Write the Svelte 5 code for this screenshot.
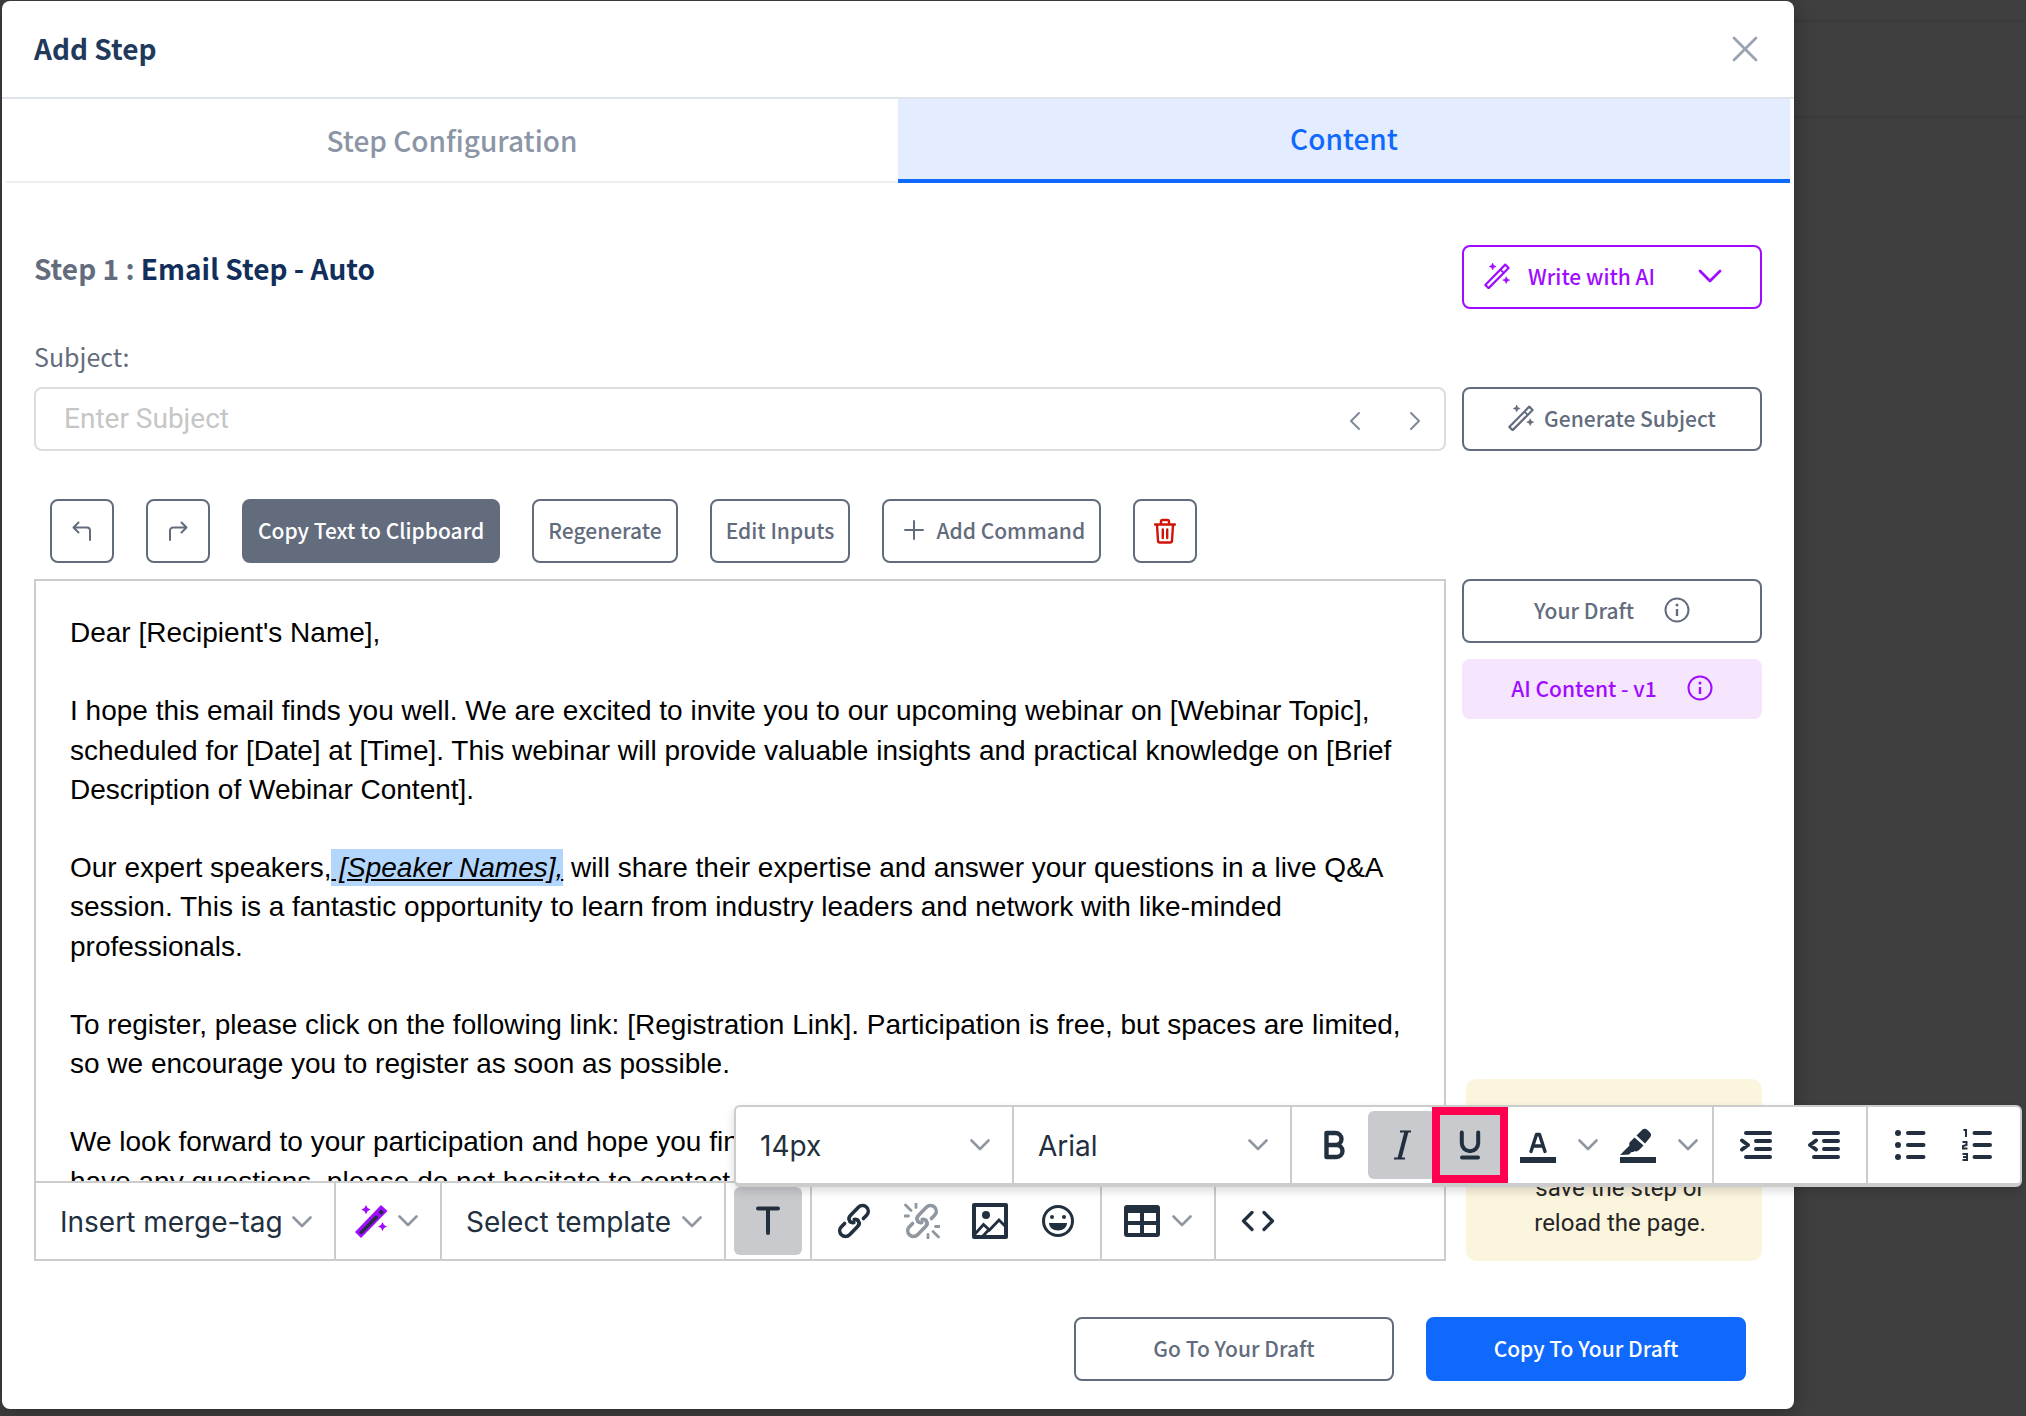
<script>
  let subject = $state('');
  let fontSize = $state('14px');
  let fontFamily = $state('Arial');
</script>

{#snippet wand()}
  <svg class="icon-wand" viewBox="0 0 24 24" aria-hidden="true">
    <path d="M1.200 20.300 19.600 1.500l3.100 3.100L4.300 23.200z" fill="none" stroke="currentColor" stroke-width="2" stroke-linejoin="round" />
    <path d="M15.200 6.200l3 3" fill="none" stroke="currentColor" stroke-width="1.600" />
    <path d="M8 0l1 2.200 2.200 1L9 4.200 8 6.400 7 4.200 4.800 3.200 7 2.200zM20.500 12.600l1 2.200 2.200 1-2.200 1-1 2.200-1-2.200-2.200-1 2.200-1z" fill="currentColor" stroke="currentColor" stroke-width=".5" />
  </svg>
{/snippet}

{#snippet chevron()}
  <svg class="icon-chevron" viewBox="0 0 20 12" aria-hidden="true">
    <path d="M1.500 1.500 10 10l8.500-8.500" fill="none" stroke="currentColor" stroke-width="2.600" stroke-linecap="round" stroke-linejoin="round" />
  </svg>
{/snippet}

{#snippet info()}
  <svg class="icon-info" viewBox="0 0 26 26" aria-hidden="true">
    <circle cx="13" cy="13" r="11.500" fill="none" stroke="currentColor" stroke-width="2" />
    <circle cx="13" cy="8" r="1.500" fill="currentColor" />
    <path d="M13 12v7" fill="none" stroke="currentColor" stroke-width="2.400" />
  </svg>
{/snippet}

<div class="backdrop">
  <div class="modal" role="dialog" aria-labelledby="dialog-title">
    <header class="head">
      <h1 id="dialog-title">Add Step</h1>
      <button class="close" aria-label="Close">
        <svg viewBox="0 0 26 26"><path d="M2 2l22 22M24 2 2 24" fill="none" stroke="currentColor" stroke-width="2.800" stroke-linecap="round" /></svg>
      </button>
    </header>

    <div class="tabs" role="tablist">
      <button class="tab" role="tab" aria-selected="false">Step Configuration</button>
      <button class="tab active" role="tab" aria-selected="true">Content</button>
    </div>

    <main class="body">
      <div class="split">
        <h2><span class="muted">Step 1 :</span> Email Step - Auto</h2>
        <button class="btn purple">
          {@render wand()}
          <span>Write with AI</span>
          <svg class="ai-chevron" viewBox="0 0 24 14" aria-hidden="true"><path d="M2 2l10 10L22 2" fill="none" stroke="currentColor" stroke-width="2.800" stroke-linecap="round" stroke-linejoin="round" /></svg>
        </button>
      </div>

      <label class="subject-label" for="subject">Subject:</label>
      <div class="split">
        <div class="subject">
          <input id="subject" type="text" placeholder="Enter Subject" bind:value={subject} />
          <button class="step" aria-label="Previous subject">
            <svg viewBox="0 0 12 20"><path d="M10 2 2 10l8 8" fill="none" stroke="currentColor" stroke-width="2" stroke-linecap="round" stroke-linejoin="round" /></svg>
          </button>
          <button class="step" aria-label="Next subject">
            <svg viewBox="0 0 12 20"><path d="M2 2l8 8-8 8" fill="none" stroke="currentColor" stroke-width="2" stroke-linecap="round" stroke-linejoin="round" /></svg>
          </button>
        </div>
        <button class="btn">{@render wand()}<span>Generate Subject</span></button>
      </div>

      <div class="actions">
        <button class="btn square" aria-label="Undo">
          <svg class="icon-turn" viewBox="0 0 20 20"><path d="M6.500 1.500 1.500 6.500l5 5M1.500 6.500H15a3 3 0 0 1 3 3V19" fill="none" stroke="currentColor" stroke-width="2" stroke-linecap="round" stroke-linejoin="round" /></svg>
        </button>
        <button class="btn square" aria-label="Redo">
          <svg class="icon-turn" viewBox="0 0 20 20"><path d="M13.500 1.500l5 5-5 5M18.500 6.500H5a3 3 0 0 0-3 3V19" fill="none" stroke="currentColor" stroke-width="2" stroke-linecap="round" stroke-linejoin="round" /></svg>
        </button>
        <button class="btn filled">Copy Text to Clipboard</button>
        <button class="btn">Regenerate</button>
        <button class="btn">Edit Inputs</button>
        <button class="btn add">
          <svg class="icon-turn" viewBox="0 0 20 20" aria-hidden="true"><path d="M10 1v18M1 10h18" fill="none" stroke="currentColor" stroke-width="2" stroke-linecap="round" /></svg>
          <span>Add Command</span>
        </button>
        <button class="btn square danger" aria-label="Delete">
          <svg class="icon-trash" viewBox="0 0 22 26"><path d="M1 6.500h20M7 6V3.500A1.500 1.500 0 0 1 8.500 2h5A1.500 1.500 0 0 1 15 3.500V6M3 7l1 15.500A2 2 0 0 0 6 24.500h10a2 2 0 0 0 2-2L19 7M8.800 11.500v8.500M13.200 11.500v8.500" fill="none" stroke="currentColor" stroke-width="2.400" stroke-linecap="round" stroke-linejoin="round" /></svg>
        </button>
      </div>

      <div class="split">
        <div class="editor">
          <div class="message" contenteditable="true" role="textbox" aria-multiline="true" aria-label="Email body" tabindex="0">
            <p>Dear [Recipient's Name],</p>
            <p>I hope this email finds you well. We are excited to invite you to our upcoming webinar on [Webinar Topic], scheduled for [Date] at [Time]. This webinar will provide valuable insights and practical knowledge on [Brief Description of Webinar Content].</p>
            <p>Our expert speakers,<span class="selected">&nbsp;[Speaker Names],</span> will share their expertise and answer your questions in a live Q&amp;A session. This is a fantastic opportunity to learn from industry leaders and network with like-minded professionals.</p>
            <p>To register, please click on the following link: [Registration Link]. Participation is free, but spaces are limited, so we encourage you to register as soon as possible.</p>
            <p>We look forward to your participation and hope you find the session both informative and valuable. If you have any questions, please do not hesitate to contact us.</p>
          </div>

          <div class="tools" role="toolbar" aria-label="Editor tools">
            <div class="group"><button class="menu merge">Insert merge-tag {@render chevron()}</button></div>
            <div class="group">
              <button class="menu wand-menu" aria-label="AI tools">
                <svg class="icon-magic" viewBox="0 0 34 34" aria-hidden="true">
                  <path d="M1 28 27 1l6.500 6L7 34z" fill="#a00cff" />
                  <path d="M5 28.500 22 11l2.500 2.500L7.500 30.500z" fill="#222f3e" />
                  <path d="M27 5.500 30 8.200 27.200 11 24.500 8z" fill="#222f3e" />
                  <path d="M12 1l1.600 3 3 1.600-3 1.600L12 10.200l-1.600-3-3-1.600 3-1.600zM28.500 18l1.500 3 3 1.500-3 1.500-1.500 3-1.500-3-3-1.500 3-1.500z" fill="#a00cff" />
                </svg>
                {@render chevron()}
              </button>
            </div>
            <div class="group"><button class="menu template">Select template {@render chevron()}</button></div>

            <div class="group pad">
              <div class="anchor">
                <button class="tool on" aria-label="Text formatting" aria-expanded="true">
                  <svg viewBox="0 0 36 36"><path d="M8 5.500h20M18 5.500V30" fill="none" stroke="currentColor" stroke-width="4" stroke-linecap="round" /></svg>
                </button>

                <div class="popup" role="toolbar" aria-label="Text formatting">
                  <div class="group picker">
                    <select aria-label="Font size" bind:value={fontSize}>
                      <option>12px</option><option>14px</option><option>16px</option>
                    </select>
                    {@render chevron()}
                  </div>
                  <div class="group picker">
                    <select aria-label="Font family" bind:value={fontFamily}>
                      <option>Arial</option><option>Georgia</option><option>Verdana</option>
                    </select>
                    {@render chevron()}
                  </div>
                  <div class="group pad">
                    <button class="tool" aria-label="Bold">
                      <svg viewBox="0 0 36 36"><path d="M10.500 6h9a6 6 0 0 1 0 12h-9zM10.500 18h10a6 6 0 0 1 0 12h-10z" fill="none" stroke="currentColor" stroke-width="4.400" stroke-linejoin="round" /></svg>
                    </button>
                    <button class="tool on" aria-label="Italic">
                      <svg viewBox="0 0 36 36"><path d="M16 4.500h11M10 31.500h11" fill="none" stroke="currentColor" stroke-width="1.800" /><path d="M22.500 4.500 15.500 31.500" fill="none" stroke="currentColor" stroke-width="4" /></svg>
                    </button>
                    <button class="tool on marked" aria-label="Underline">
                      <svg viewBox="0 0 36 36"><path d="M9.800 5.500v10.500a8.200 8.200 0 0 0 16.400 0V5.500" fill="none" stroke="currentColor" stroke-width="4" stroke-linecap="round" /><path d="M10 30.500h16" fill="none" stroke="currentColor" stroke-width="4" stroke-linecap="round" /></svg>
                    </button>
                    <button class="tool" aria-label="Text color">
                      <svg viewBox="0 0 36 36"><path d="M11 24.500 16.500 7.500h3L25 24.500M13.200 19h9.600" fill="none" stroke="currentColor" stroke-width="3.400" stroke-linecap="round" stroke-linejoin="round" /><path d="M0 30h36v6H0z" fill="currentColor" /></svg>
                    </button>
                    <button class="caret" aria-label="Choose text color">{@render chevron()}</button>
                    <button class="tool" aria-label="Highlight color">
                      <svg viewBox="0 0 36 36"><path d="M0 28 9.500 18.500c-1-2.500 1-4 3-6l2-2 9 8-3 3c-2 2.200-3.800 3.600-6 2.500l-1 1h-2L9 27.500z" fill="currentColor" /><path d="M16.500 8.500 22 3c1.800-1.700 3.600-1.700 5.200-.2l2.600 2.400c1.600 1.600 1.700 3.400.2 5.200l-5 6z" fill="currentColor" /><path d="M0 30h36v6H0z" fill="currentColor" /></svg>
                    </button>
                    <button class="caret" aria-label="Choose highlight color">{@render chevron()}</button>
                  </div>
                  <div class="group pad">
                    <button class="tool" aria-label="Increase indent">
                      <svg viewBox="0 0 36 36"><path d="M8 6h24M18 14h14M18 22h14M8 30h24M4 13.500l6 4.500-6 4.500" fill="none" stroke="currentColor" stroke-width="4" stroke-linecap="round" stroke-linejoin="round" /></svg>
                    </button>
                    <button class="tool" aria-label="Decrease indent">
                      <svg viewBox="0 0 36 36"><path d="M8 6h24M18 14h14M18 22h14M8 30h24M10 13.500 4 18l6 4.500" fill="none" stroke="currentColor" stroke-width="4" stroke-linecap="round" stroke-linejoin="round" /></svg>
                    </button>
                  </div>
                  <div class="group pad">
                    <button class="tool" aria-label="Bulleted list">
                      <svg viewBox="0 0 36 36"><path d="M16 6h15.500M16 18h15.500M16 30h15.500" fill="none" stroke="currentColor" stroke-width="4" stroke-linecap="round" /><circle cx="6" cy="6" r="3" fill="currentColor" /><circle cx="6" cy="18" r="3" fill="currentColor" /><circle cx="6" cy="30" r="3" fill="currentColor" /></svg>
                    </button>
                    <button class="tool" aria-label="Numbered list">
                      <svg viewBox="0 0 36 36"><path d="M14.500 6H30M14.500 18H30M14.500 30H30" fill="none" stroke="currentColor" stroke-width="4" stroke-linecap="round" /><path d="M3.500 3H6v7M2.500 15h4v3l-3.500 1v2.500h4.500M2.500 27h4.500v6H2.500M3 30h4" fill="none" stroke="currentColor" stroke-width="2" /></svg>
                    </button>
                  </div>
                </div>
              </div>
            </div>

            <div class="group pad">
              <button class="tool" aria-label="Insert link">
                <svg viewBox="0 0 36 36"><path d="M14 18.500c-1.600-2-1.400-4.200.4-6l8-8.300c2.200-2.200 6-2.200 8.200 0s2.200 5.800 0 8l-3.200 3.300" fill="none" stroke="currentColor" stroke-width="3.600" stroke-linecap="round" /><path d="M22 17.500c1.600 2 1.400 4.200-.4 6l-8 8.300c-2.200 2.200-6 2.200-8.200 0s-2.200-5.800 0-8l3.200-3.300" fill="none" stroke="currentColor" stroke-width="3.600" stroke-linecap="round" /><path d="M14 18.500c1 1 2.400 1.400 3.800 1M22 17.500c-1-1-2.400-1.400-3.800-1" fill="none" stroke="currentColor" stroke-width="3.600" stroke-linecap="round" /></svg>
              </button>
              <button class="tool dim" aria-label="Remove link">
                <svg viewBox="0 0 36 36"><path d="M14 18.500c-1.600-2-1.400-4.200.4-6l8-8.300c2.200-2.200 6-2.200 8.200 0s2.200 5.800 0 8l-3.200 3.300" fill="none" stroke="currentColor" stroke-width="3.600" stroke-linecap="round" /><path d="M22 17.500c1.600 2 1.400 4.200-.4 6l-8 8.300c-2.200 2.200-6 2.200-8.200 0s-2.200-5.800 0-8l3.200-3.300" fill="none" stroke="currentColor" stroke-width="3.600" stroke-linecap="round" /><path d="M14 18.500c1 1 2.400 1.400 3.800 1M22 17.500c-1-1-2.400-1.400-3.800-1" fill="none" stroke="currentColor" stroke-width="3.600" stroke-linecap="round" /><path d="M1.500 2 7 7.500M12 .5v4M.5 13h4M34.500 34 29 28.500M24 35.500v-4M35.500 23.500h-4" fill="none" stroke="currentColor" stroke-width="2.800" stroke-linecap="round" /></svg>
              </button>
              <button class="tool" aria-label="Insert image">
                <svg viewBox="0 0 36 36"><path d="M2 2h32v32H2z" fill="none" stroke="currentColor" stroke-width="4" stroke-linejoin="round" /><circle cx="14" cy="12" r="4" fill="currentColor" /><path d="M3 31l8.500-9.500 6 5.500L27 17l8 8M11 33l6.500-7" fill="none" stroke="currentColor" stroke-width="2.800" /></svg>
              </button>
              <button class="tool" aria-label="Insert emoji">
                <svg viewBox="0 0 36 36"><circle cx="18" cy="18" r="14.500" fill="none" stroke="currentColor" stroke-width="3" /><circle cx="12" cy="14" r="2" fill="currentColor" /><circle cx="24" cy="14" r="2" fill="currentColor" /><path d="M9 20h18c0 4.500-4 7.500-9 7.500S9 24.500 9 20z" fill="currentColor" /></svg>
              </button>
            </div>

            <div class="group">
              <button class="menu table" aria-label="Insert table">
                <svg class="icon-large" viewBox="0 0 36 36" aria-hidden="true"><path d="M3 2h30a3 3 0 0 1 3 3v26a3 3 0 0 1-3 3H3a3 3 0 0 1-3-3V5a3 3 0 0 1 3-3zM4 10v8h12v-8zM20 10v8h12v-8zM4 22v8h12v-8zM20 22v8h12v-8z" fill="currentColor" fill-rule="evenodd" /></svg>
                {@render chevron()}
              </button>
            </div>

            <div class="group pad last">
              <button class="tool" aria-label="Source code">
                <svg viewBox="0 0 36 36"><path d="M12 9.500 3.500 18l8.500 8.500M24 9.500l8.500 8.500-8.500 8.500" fill="none" stroke="currentColor" stroke-width="3.200" stroke-linecap="round" stroke-linejoin="round" /></svg>
              </button>
            </div>
          </div>
        </div>

        <aside class="side">
          <button class="btn version">Your Draft {@render info()}</button>
          <button class="btn version tinted">AI Content - v1 {@render info()}</button>
          <p class="note">Your draft will be lost unless you save the step or reload the page.</p>
        </aside>
      </div>

      <footer class="foot">
        <button class="btn">Go To Your Draft</button>
        <button class="btn primary">Copy To Your Draft</button>
      </footer>
    </main>
  </div>
</div>

<style>
  :global(body) {
    background: #3f3f3f;
  }

  .backdrop,
  .backdrop * {
    box-sizing: border-box;
  }

  .backdrop {
    min-height: 100vh;
    padding: 1px 232px 7px 2px;
    overflow: hidden;
    background: linear-gradient(#3a3a3a, #3a3a3a) 0 20px / 100% 2px no-repeat,
      linear-gradient(#3a3a3a, #3a3a3a) 0 116px / 100% 2px no-repeat,
      #3f3f3f;
    font-family: 'Noto Sans CJK SC', sans-serif;
    color: #636c7d;
  }

  button {
    margin: 0;
    padding: 0;
    border: 0;
    background: none;
    color: inherit;
    font: inherit;
    cursor: pointer;
  }

  h1,
  h2,
  p {
    margin: 0;
  }

  svg {
    display: block;
    flex: none;
  }

  .modal {
    border-radius: 8px;
    background: #fff;
    box-shadow: 0 4px 20px rgba(0, 0, 0, 0.3);
  }

  .head {
    display: flex;
    align-items: center;
    justify-content: space-between;
    height: 98px;
    padding: 0 36px 0 32px;
    border-bottom: 2px solid #dfe3ea;
  }

  h1 {
    padding-bottom: 2px;
    font-size: 28px;
    font-weight: 700;
    line-height: 40px;
    color: #213a5c;
  }

  .close {
    color: #9aa3b2;
  }

  .close svg {
    width: 26px;
    height: 26px;
  }

  .tabs {
    display: grid;
    grid-template-columns: 1fr 1fr;
    padding: 0 4px;
  }

  .tab {
    height: 84px;
    border-bottom: 2px solid #eee;
    font-size: 28px;
    font-weight: 500;
    line-height: 40px;
    color: #8b95a5;
  }

  .tab.active {
    padding-bottom: 2px;
    border-bottom: 4px solid #0f69fd;
    background: #e4edff;
    color: #0f69fd;
  }

  .body {
    padding: 62px 32px 28px;
  }

  .split {
    display: grid;
    grid-template-columns: 1fr 300px;
    gap: 16px;
  }

  h2 {
    padding-top: 3px;
    font-size: 28px;
    font-weight: 700;
    line-height: 40px;
    color: #122f5b;
  }

  .muted {
    color: #636c7d;
  }

  .btn {
    display: flex;
    align-items: center;
    justify-content: center;
    gap: 10px;
    height: 64px;
    padding: 0 14px 2px;
    border: 2px solid #636c7d;
    border-radius: 8px;
    font-size: 21px;
    font-weight: 500;
    line-height: 32px;
    white-space: nowrap;
  }

  .purple {
    justify-content: flex-start;
    gap: 18px;
    padding: 0 38px 2px 20px;
    border-color: #a00cff;
    color: #a00cff;
  }

  .ai-chevron {
    width: 24px;
    height: 14px;
    margin-left: auto;
  }

  .icon-wand {
    width: 26px;
    height: 26px;
  }

  .icon-chevron {
    width: 20px;
    height: 12px;
    color: #9097a0;
  }

  .icon-info {
    width: 26px;
    height: 26px;
  }

  .icon-turn {
    width: 20px;
    height: 20px;
  }

  .icon-trash {
    width: 22px;
    height: 26px;
  }

  .subject-label {
    display: block;
    margin: 29px 0 13px;
    font-size: 25px;
    line-height: 36px;
  }

  .subject {
    display: flex;
    align-items: center;
    height: 64px;
    padding-right: 14px;
    border: 2px solid #dcdcdc;
    border-radius: 8px;
  }

  .subject input {
    flex: 1;
    min-width: 0;
    height: 100%;
    padding: 0 28px 2px;
    border: 0;
    outline: 0;
    background: none;
    font-family: Roboto, sans-serif;
    font-size: 28px;
    color: #333;
  }

  .subject input::placeholder {
    color: #c6c6c6;
    opacity: 1;
  }

  .step {
    display: grid;
    place-items: center;
    width: 30px;
    height: 36px;
    margin: 4px 0 0 30px;
    color: #7f8998;
  }

  .step svg {
    width: 12px;
    height: 20px;
  }

  .actions {
    display: flex;
    flex-wrap: wrap;
    gap: 32px;
    margin: 48px 0 16px;
    padding-left: 16px;
  }

  .square {
    width: 64px;
    padding: 0;
  }

  .filled {
    background: #636c7d;
    color: #fff;
  }

  .add {
    gap: 12px;
    padding-left: 20px;
  }

  .danger {
    color: #d0140a;
  }

  .editor {
    border: 2px solid #ccc;
    min-width: 0;
  }

  .message {
    height: 600px;
    padding: 32px 34px 0;
    overflow: hidden;
    outline: 0;
    font-family: 'Liberation Sans', Arial, sans-serif;
    font-size: 28px;
    line-height: 1.4;
    color: #000;
  }

  .message p + p {
    margin-top: 1.4em;
  }

  .selected {
    padding: 3px 0;
    background: #b3d6fd;
    font-style: italic;
    text-decoration: underline;
  }

  .tools {
    display: flex;
    border-top: 2px solid #ccc;
    font-family: Inter, sans-serif;
    font-size: 28px;
    color: #222f3e;
  }

  .group {
    display: flex;
    align-items: center;
    height: 76px;
    border-right: 2px solid #ccc;
  }

  .group.last {
    border-right: 0;
  }

  .pad {
    padding: 0 8px;
  }

  .menu {
    display: flex;
    align-items: center;
    justify-content: space-between;
    height: 68px;
    padding: 2px 22px 0 24px;
    white-space: nowrap;
  }

  .merge {
    width: 298px;
  }

  .template {
    width: 282px;
  }

  .wand-menu {
    width: 104px;
    padding: 0 22px 0 18px;
  }

  .table {
    width: 112px;
    padding: 0 22px;
  }

  .icon-magic {
    width: 34px;
    height: 34px;
  }

  .icon-large {
    width: 36px;
    height: 36px;
  }

  .tool {
    display: grid;
    place-items: center;
    width: 68px;
    height: 68px;
    border-radius: 6px;
  }

  .tool svg {
    width: 36px;
    height: 36px;
  }

  .tool.on {
    background: #c9cace;
  }

  .tool.dim {
    color: #9097a0;
  }

  .caret {
    display: grid;
    place-items: center;
    width: 32px;
    height: 68px;
  }

  .anchor {
    position: relative;
  }

  .popup {
    position: absolute;
    bottom: 100%;
    left: 0;
    z-index: 2;
    display: flex;
    border: 2px solid #ccc;
    border-bottom-width: 4px;
    border-radius: 6px;
    background: #fff;
    box-shadow: 0 4px 10px rgba(0, 0, 0, 0.15);
  }

  .popup .group:last-child {
    border-right: 0;
  }

  .picker {
    position: relative;
    width: 278px;
  }

  .picker select {
    width: 100%;
    height: 100%;
    padding: 2px 48px 0 24px;
    border: 0;
    background: none;
    appearance: none;
    font: inherit;
    color: inherit;
  }

  .picker :global(.icon-chevron) {
    position: absolute;
    right: 22px;
    pointer-events: none;
  }

  .tool.marked {
    border-radius: 0;
    outline: 8px solid #ff0050;
    outline-offset: -4px;
    z-index: 1;
  }

  .side {
    display: flex;
    flex-direction: column;
    gap: 16px;
  }

  .version {
    gap: 30px;
  }

  .tinted {
    height: 60px;
    border: 0;
    background: #f5e5fd;
    color: #a00cff;
  }

  .note {
    margin: auto 0 0 4px;
    padding: 22px 44px 20px 56px;
    border-radius: 10px;
    background: #fcf5dd;
    font-family: Roboto, sans-serif;
    font-size: 24px;
    line-height: 35px;
    text-align: center;
    color: #262626;
  }

  .foot {
    display: flex;
    justify-content: flex-end;
    gap: 32px;
    margin-top: 56px;
    padding-right: 16px;
  }

  .foot .btn {
    width: 320px;
  }

  .primary {
    border-color: #0f69fd;
    background: #0f69fd;
    color: #fff;
  }
</style>
